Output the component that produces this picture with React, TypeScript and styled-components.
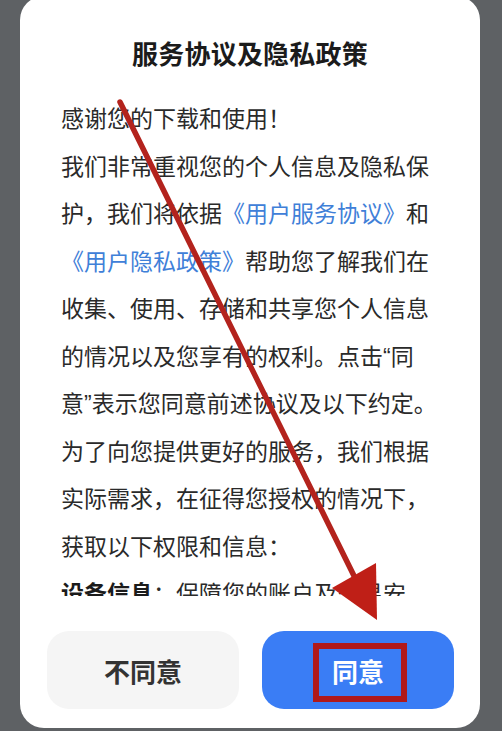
import React from "react";
import styled, { createGlobalStyle } from "styled-components";

const Global = createGlobalStyle`
  html, body {
    margin: 0;
    padding: 0;
    background: #5e6164;
  }
  body {
    font-family: "Liberation Sans", "Noto Sans CJK SC", sans-serif;
  }
  * { box-sizing: border-box; }
`;

const Screen = styled.div`
  position: relative;
  width: 502px;
  height: 731px;
  overflow: hidden;
  background: #5e6164;
  padding: 0 22px 0 20px;
`;

const Card = styled.div`
  margin-top: -4px;
  height: 732px;
  background: #ffffff;
  border-radius: 24px;
  display: flex;
  flex-direction: column;
  padding: 41px 0 19px;
`;

const Title = styled.h1`
  margin: 0;
  height: 36px;
  line-height: 36px;
  text-align: center;
  font-size: 26px;
  font-weight: 600;
  color: #1b1b1b;
  letter-spacing: 0.2px;
`;

const Body = styled.div`
  margin-top: 23px;
  height: 500px;
  overflow: hidden;
  padding: 0 30px 0 41px;
  font-size: 23px;
  line-height: 47.5px;
  color: #2a2a2a;
  white-space: nowrap;
`;

const Line = styled.div`
  height: 47.5px;
`;

const Link = styled.span`
  color: #3f80d8;
`;

const Strong = styled.span`
  font-weight: 700;
  color: #1b1b1b;
`;

const Footer = styled.div`
  margin-top: 35px;
  display: grid;
  grid-template-columns: 192px 192px;
  gap: 23px;
  padding: 0 26px 0 27px;
`;

const Button = styled.button<{ $primary?: boolean }>`
  position: relative;
  height: 78px;
  border: none;
  border-radius: 22px;
  background: ${(p) => (p.$primary ? "#3a7df5" : "#f5f5f5")};
  color: ${(p) => (p.$primary ? "#ffffff" : "#333333")};
  font-family: "Noto Sans CJK SC", sans-serif;
  font-size: 26px;
  font-weight: 600;
  display: flex;
  align-items: center;
  justify-content: center;
  padding: 0;
`;

const Highlight = styled.span`
  position: absolute;
  left: 51px;
  top: 12px;
  width: 94px;
  height: 59px;
  border: 6px solid #b0191b;
  pointer-events: none;
`;

const Overlay = styled.svg`
  position: absolute;
  left: 0;
  top: 0;
  pointer-events: none;
`;

export default function App() {
  return (
    <>
      <Global />
      <Screen>
        <Card>
          <Title>服务协议及隐私政策</Title>
          <Body>
            <Line>感谢您的下载和使用！</Line>
            <Line>我们非常重视您的个人信息及隐私保</Line>
            <Line>
              护，我们将依据<Link>《用户服务协议》</Link>和
            </Line>
            <Line>
              <Link>《用户隐私政策》</Link>帮助您了解我们在
            </Line>
            <Line>收集、使用、存储和共享您个人信息</Line>
            <Line>的情况以及您享有的权利。点击“同</Line>
            <Line>意”表示您同意前述协议及以下约定。</Line>
            <Line>为了向您提供更好的服务，我们根据</Line>
            <Line>实际需求，在征得您授权的情况下，</Line>
            <Line>获取以下权限和信息：</Line>
            <Line>
              <Strong>设备信息</Strong>：保障您的账户及交易安
            </Line>
          </Body>
          <Footer>
            <Button>不同意</Button>
            <Button $primary>
              同意
              <Highlight />
            </Button>
          </Footer>
        </Card>
        <Overlay width="502" height="731" viewBox="0 0 502 731">
          <line
            x1="120"
            y1="102"
            x2="360"
            y2="588"
            stroke="#b3231d"
            strokeWidth="5.5"
            strokeLinecap="round"
          />
          <polygon points="376,563 332,588 377,620" fill="#bf1f17" />
        </Overlay>
      </Screen>
    </>
  );
}
